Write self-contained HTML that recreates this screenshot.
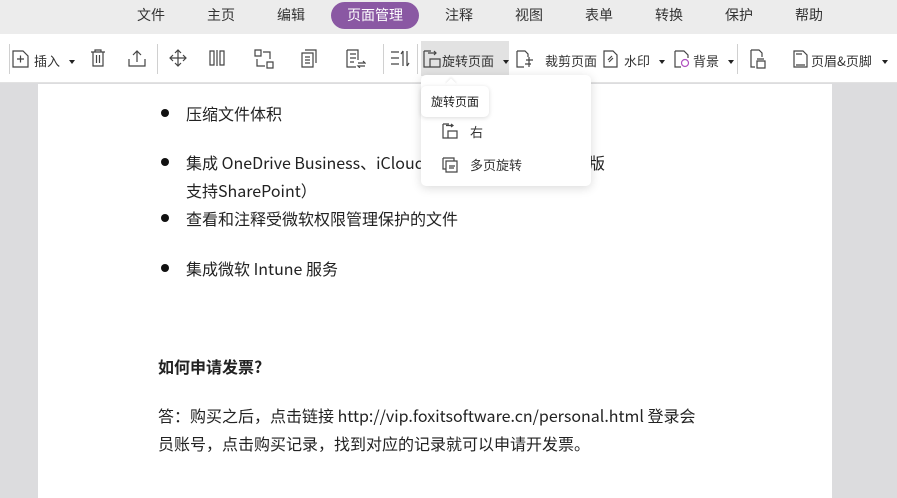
<!DOCTYPE html>
<html><head><meta charset="utf-8"><style>
*{margin:0;padding:0;box-sizing:border-box}
body{width:897px;height:498px;overflow:hidden;background:#dcdcde;font-family:"Noto Sans CJK SC","Liberation Sans",sans-serif;position:relative}
.a{position:absolute;white-space:nowrap}
#tabs{left:0;top:0;width:897px;height:34px;background:#ececec}
.tab{font-size:14px;color:#333;top:5px;transform:translateX(-50%)}
#pill{left:331px;top:2px;width:88px;height:27px;border-radius:14px;background:#8a58a3;color:#fff;font-size:14px;text-align:center;line-height:27px}
#tb{left:0;top:34px;width:897px;height:49px;background:#fff;border-bottom:1px solid #e2e2e2}
.sep{width:1px;height:30px;background:#d0d0d0;top:44px}
.t{font-size:13px;color:#333;top:51px}
.dd{width:0;height:0;border-left:3px solid transparent;border-right:3px solid transparent;border-top:4px solid #222;top:60px}
svg.i{position:absolute;fill:none;stroke:#444;stroke-width:1.2}
#doc{left:38px;top:84px;width:794px;height:414px;background:#fff}
.p{font-size:16px;color:#222}
.b{width:8px;height:8px;border-radius:50%;background:#111;left:161px}
</style></head><body>
<div id="tabs" class="a"></div>
<div class="a tab" style="left:151px">文件</div>
<div class="a tab" style="left:221px">主页</div>
<div class="a tab" style="left:291px">编辑</div>
<div id="pill" class="a">页面管理</div>
<div class="a tab" style="left:459px">注释</div>
<div class="a tab" style="left:529px">视图</div>
<div class="a tab" style="left:599px">表单</div>
<div class="a tab" style="left:669px">转换</div>
<div class="a tab" style="left:739px">保护</div>
<div class="a tab" style="left:809px">帮助</div>

<div id="tb" class="a"></div>
<div class="a" style="left:421px;top:41px;width:88px;height:35px;background:#e2e2e2"></div>
<div class="a sep" style="left:9px"></div>
<div class="a sep" style="left:157px"></div>
<div class="a sep" style="left:383px"></div>
<div class="a sep" style="left:417px"></div>
<div class="a sep" style="left:737px"></div>

<svg class="i" style="left:12px;top:50px" width="18" height="18"><path d="M1 1h10l5 5v11H1z M5 9h7 M8.5 5.5v7"/></svg>
<div class="a t" style="left:34px">插入</div><div class="a dd" style="left:69px"></div>
<svg class="i" style="left:90px;top:49px" width="16" height="18"><path d="M1 3h14 M5 3V1h6v2 M3 3v14h10V3 M6.5 6v8 M9.5 6v8"/></svg>
<svg class="i" style="left:128px;top:49px" width="18" height="18"><path d="M1 10v7h16v-7 M9 13V2 M5 6l4-4 4 4"/></svg>
<svg class="i" style="left:169px;top:49px" width="18" height="18"><path d="M9 1v16 M1 9h16 M6 4l3-3 3 3 M6 14l3 3 3-3 M4 6l-3 3 3 3 M14 6l3 3-3 3"/></svg>
<svg class="i" style="left:209px;top:49px" width="16" height="18"><path d="M1 2h4v14H1z M11 2h4v14h-4z M8 1v16" /></svg>
<svg class="i" style="left:254px;top:49px" width="20" height="20"><path d="M1 1h6v6H1z M13 13h6v6h-6z M9 3h7v7 M11 17H3v-7"/></svg>
<svg class="i" style="left:301px;top:49px" width="16" height="19"><path d="M1 4h11v14H1z M4 1h11v13 M4 8h5 M4 11h5 M4 14h5"/></svg>
<svg class="i" style="left:346px;top:49px" width="20" height="19"><path d="M1 1h11l0 0v10 M1 1v17h9 M4 5h6 M4 9h6 M4 13h4 M12 14h7l-2-2 M19 17h-7l2 2"/></svg>
<svg class="i" style="left:390px;top:50px" width="20" height="17"><path d="M1 2h8 M1 8h8 M1 14h8 M13 1v15 M17 1v15 M11 4l2-3 M19 13l-2 3"/></svg>
<svg class="i" style="left:423px;top:50px" width="18" height="18"><path d="M1 1h7 M1 1v16h6 M11 1l2 2-2 2 M7 9h10v8H7z M5 3h8"/></svg>
<div class="a t" style="left:442px">旋转页面</div><div class="a dd" style="left:503px"></div>
<svg class="i" style="left:516px;top:50px" width="18" height="19"><path d="M1 1h8l3 3v3 M1 1v16h7 M10 10h7 M13 7v10 M9 14h6"/></svg>
<div class="a t" style="left:545px">裁剪页面</div>
<svg class="i" style="left:603px;top:50px" width="15" height="18"><path d="M1 1h9l4 4v12H1z M5 10l4-4 M6 12l4-4"/></svg>
<div class="a t" style="left:624px">水印</div><div class="a dd" style="left:659px"></div>
<svg class="i" style="left:674px;top:50px" width="16" height="18"><path d="M1 1h9l4 4v3 M1 1v16h6"/><circle cx="11" cy="13" r="3.5" stroke="#b050c0"/></svg>
<div class="a t" style="left:693px">背景</div><div class="a dd" style="left:728px"></div>
<svg class="i" style="left:750px;top:49px" width="16" height="20"><path d="M1 1h8l3 3v4 M1 1v17h4 M7 10h7 M7 12h8v7H7z"/></svg>
<svg class="i" style="left:793px;top:50px" width="15" height="18"><path d="M1 1h9l4 4v12H1z M3 4h6 M3 15h9"/></svg>
<div class="a t" style="left:811px">页眉&amp;页脚</div><div class="a dd" style="left:882px"></div>

<div id="doc" class="a"></div>
<div class="a b" style="top:109px"></div><div class="a p" style="left:186px;top:101px">压缩文件体积</div>
<div class="a b" style="top:158px"></div><div class="a p" style="left:186px;top:150px">集成 OneDrive Business、iCloud</div><div class="a p" style="left:589px;top:150px">版</div>
<div class="a p" style="left:186px;top:178px">支持SharePoint）</div>
<div class="a b" style="top:214px"></div><div class="a p" style="left:186px;top:206px">查看和注释受微软权限管理保护的文件</div>
<div class="a b" style="top:264px"></div><div class="a p" style="left:186px;top:256px">集成微软 Intune 服务</div>
<div class="a p" style="left:158px;top:354px;font-weight:bold">如何申请发票?</div>
<div class="a p" style="left:158px;top:403px">答：购买之后，点击链接 http://vip.foxitsoftware.cn/personal.html 登录会</div>
<div class="a p" style="left:158px;top:431px">员账号，点击购买记录，找到对应的记录就可以申请开发票。</div>

<div class="a" style="left:421px;top:75px;width:170px;height:111px;background:#fff;border-radius:5px;box-shadow:0 2px 10px rgba(0,0,0,.15)"></div>
<div class="a" style="left:447px;top:80px;width:8px;height:8px;background:#fff;transform:rotate(45deg);box-shadow:-1px -1px 2px rgba(0,0,0,.08)"></div>
<div class="a" style="left:421px;top:86px;width:68px;height:31px;background:#fff;border-radius:5px;box-shadow:0 1px 5px rgba(0,0,0,.15);font-size:12px;color:#222;padding:7px 0 0 10px">旋转页面</div>
<svg class="i" style="left:442px;top:123px" width="16" height="16"><path d="M1 1h6 M1 1v14h5 M9 1l2 1.5-2 1.5 M6 8h9v7H6z M4 2.5h7"/></svg>
<div class="a" style="left:470px;top:122px;font-size:13px;color:#333">右</div>
<svg class="i" style="left:442px;top:157px" width="16" height="16"><path d="M1 1h11v3 M1 1v11h3 M4 4h11v11H4z M7 9h6 M7 11h5"/></svg>
<div class="a" style="left:470px;top:155px;font-size:13px;color:#333">多页旋转</div>
</body></html>
